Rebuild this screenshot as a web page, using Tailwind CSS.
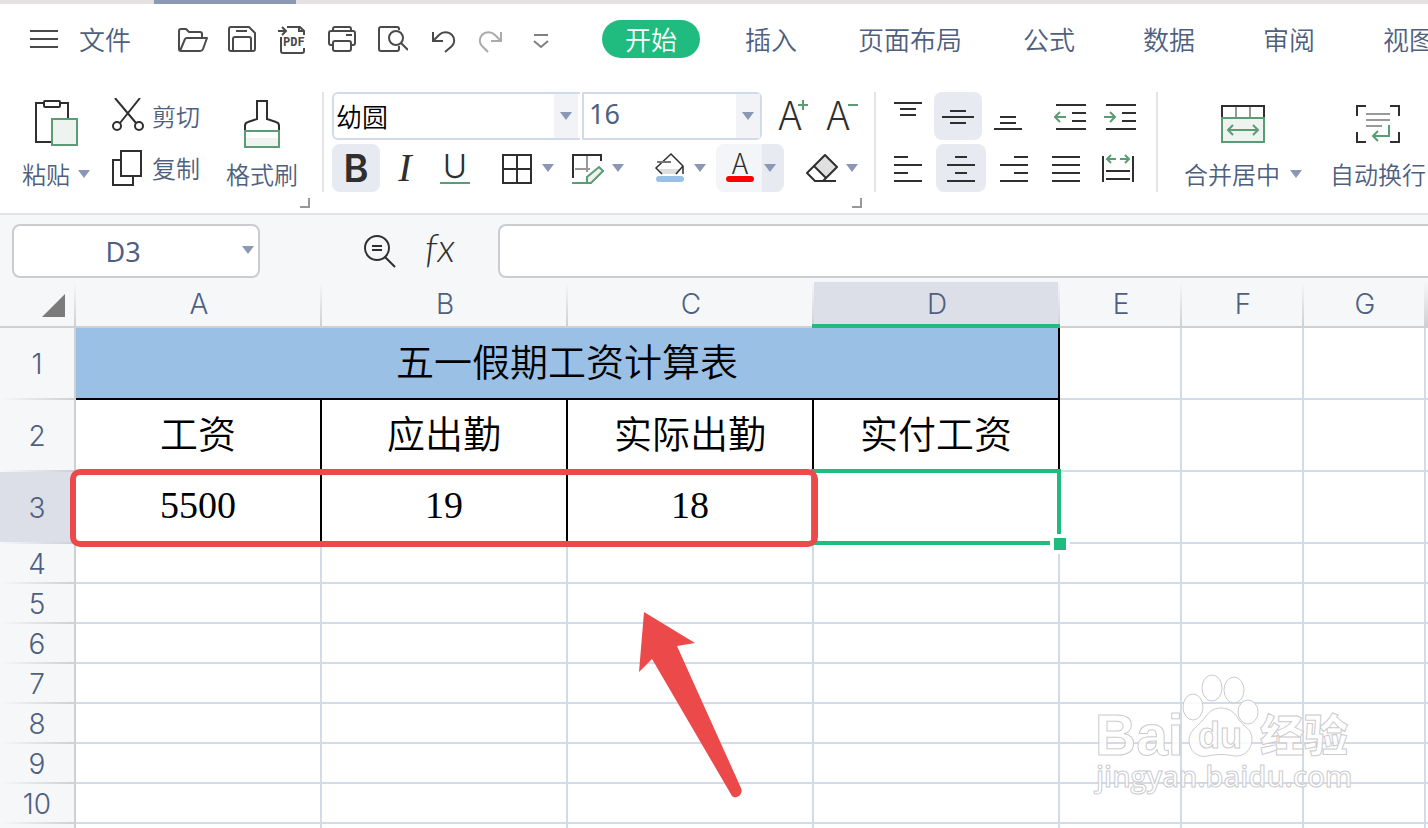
<!DOCTYPE html>
<html lang="zh-CN">
<head>
  <meta charset="UTF-8" />
  <meta name="viewport" content="width=device-width, initial-scale=1.0"/>
  <title>五一假期工资计算表</title>
  <script src="https://cdn.jsdelivr.net/npm/@tailwindcss/browser@4"></script>
</head>
<body class="h-screen overflow-hidden flex flex-col bg-white text-[#4f5f80] font-[350] font-['Noto_Sans_CJK_SC',sans-serif]">
  <!-- Thanh tab tài liệu -->
  <div class="h-1 shrink-0 bg-[#e5e1e3] pl-[154px]">
    <div class="h-1 w-[142px] bg-[#8a98b4]"></div>
  </div>

  <!-- Menu -->
  <nav class="h-[70px] shrink-0 flex items-center pl-7 text-[26px] leading-[38px] whitespace-nowrap overflow-hidden">
    <button class="flex items-center gap-[19px] shrink-0">
      <svg class="w-8 h-8" viewBox="0 0 32 32" fill="none" stroke="#4a4a4a" stroke-width="2"><path d="M2 8h28M2 16h28M2 24h28"/></svg>
      文件
    </button>
    <div class="flex gap-[18px] ml-[45px] shrink-0">
      <button aria-label="打开"><svg class="w-8 h-8" viewBox="0 0 32 32" fill="none" stroke="#4a4a4a" stroke-width="2" stroke-linejoin="round"><path d="M3 27V8a2 2 0 0 1 2-2h5l3 3h11a2 2 0 0 1 2 2v3M4 28l5-12a2 2 0 0 1 2-1h20l-4 11a3 3 0 0 1-3 2H5a2 2 0 0 1-2-2"/></svg></button>
      <button aria-label="保存"><svg class="w-8 h-8" viewBox="0 0 32 32" fill="none" stroke="#4a4a4a" stroke-width="2" stroke-linejoin="round"><path d="M5 4h18l6 6v16a2 2 0 0 1-2 2H5a2 2 0 0 1-2-2V6a2 2 0 0 1 2-2zM10 8h11M7 28V16a2 2 0 0 1 2-2h14a2 2 0 0 1 2 2v12"/></svg></button>
      <button aria-label="输出为PDF"><svg class="w-8 h-8" viewBox="0 0 32 32" fill="none" stroke="#4a4a4a" stroke-width="2"><path d="M2 8h8M6 4l4 4-4 4M11 4h13l4 4v4M23 4v4h5M5 14v14a2 2 0 0 0 2 2h19a2 2 0 0 0 2-2v-3"/><text x="7" y="23" font-size="12" font-weight="700" font-family="DejaVu Sans Mono" fill="#4a4a4a" stroke="none">PDF</text></svg></button>
      <button aria-label="打印"><svg class="w-8 h-8" viewBox="0 0 32 32" fill="none" stroke="#4a4a4a" stroke-width="2"><path d="M7 8V6a2 2 0 0 1 2-2h14a2 2 0 0 1 2 2v2M7 22H5a2 2 0 0 1-2-2V10a2 2 0 0 1 2-2h22a2 2 0 0 1 2 2v10a2 2 0 0 1-2 2h-2M20 12h6"/><rect x="7" y="18" width="18" height="10" rx="2"/></svg></button>
      <button aria-label="打印预览"><svg class="w-8 h-8" viewBox="0 0 32 32" fill="none" stroke="#4a4a4a" stroke-width="2"><path d="M23 7V6a2 2 0 0 0-2-2H5a2 2 0 0 0-2 2v20a2 2 0 0 0 2 2h16a2 2 0 0 0 2-2v-3M25 20l7 7"/><circle cx="20" cy="15" r="7"/></svg></button>
      <button aria-label="撤消"><svg class="w-8 h-8" viewBox="0 0 32 32" fill="none" stroke="#4a4a4a" stroke-width="2"><path d="M7 9v9h10M8 17l5-5a9 9 0 0 1 13 0a8 8 0 0 1 0 11l-7 6"/></svg></button>
      <button aria-label="恢复"><svg class="w-8 h-8" viewBox="0 0 32 32" fill="none" stroke="#aaaaaa" stroke-width="2"><path d="M25 9v9H15M24 17l-5-5a9 9 0 0 0-13 0a8 8 0 0 0 0 11l6 6"/></svg></button>
      <button aria-label="更多"><svg class="w-8 h-8" viewBox="0 0 32 32" fill="none" stroke="#808080" stroke-width="2"><path d="M8 12h14M8 18l7 6 7-6"/></svg></button>
    </div>
    <div class="flex gap-[22px] ml-11 shrink-0">
      <a href="#" class="px-[23px] rounded-full bg-[#20bb7e] text-white">开始</a>
      <a href="#" class="px-[23px]">插入</a>
      <a href="#" class="px-4">页面布局</a>
      <a href="#" class="px-[23px]">公式</a>
      <a href="#" class="px-[23px]">数据</a>
      <a href="#" class="px-[23px]">审阅</a>
      <a href="#" class="px-[23px]">视图</a>
    </div>
  </nav>

  <!-- Ribbon -->
  <div class="shrink-0 flex pt-[18px] pb-[21px] border-b-2 border-[#e2e3e8] text-2xl whitespace-nowrap overflow-hidden">
    <!-- Clipboard -->
    <div class="relative flex shrink-0 pl-[22px] pr-6 border-r-2 border-[#e4e5e8]">
      <button class="w-[68px] flex flex-col items-center">
        <span class="h-16 flex items-center">
          <svg class="w-11 h-12" viewBox="0 1 44 48" fill="white" stroke="#2f2f2f" stroke-width="2"><rect x="2" y="4" width="32" height="39"/><rect x="10" y="2" width="16" height="6" rx="1"/><rect x="18" y="20" width="25" height="26" fill="#eef3f0" stroke="#5a9c74"/></svg>
        </span>
        <span class="flex items-center gap-2 leading-9">粘贴
          <svg class="w-3 h-2" viewBox="0 0 12 8" fill="#8b98b5"><path d="M0 0h12L6 8z"/></svg></span>
      </button>
      <div class="flex flex-col gap-1 ml-[22px]">
        <button class="h-12 flex items-center gap-2">
          <svg class="w-8 h-9" viewBox="0 0 32 36" fill="none" stroke="#2f2f2f" stroke-width="2"><path d="M3 0l21 25M28 0L8 25"/><circle cx="5" cy="28" r="4"/><circle cx="27" cy="28" r="4"/></svg>剪切</button>
        <button class="h-12 flex items-center gap-2">
          <svg class="w-8 h-9" viewBox="0 0 32 36" fill="none" stroke="#2f2f2f" stroke-width="2"><path d="M9 10H1v25h20v-8"/><rect x="9" y="1" width="20" height="25"/></svg>复制</button>
      </div>
      <button class="w-[72px] ml-[26px] flex flex-col items-center">
        <span class="h-16 flex items-center">
          <svg class="w-9 h-12" viewBox="0 0 36 48" fill="none" stroke="#2f2f2f" stroke-width="2"><path d="M1 31v-5a4 4 0 0 1 3-4l9-3V1h10v18l9 3a4 4 0 0 1 3 4v5"/><path d="M2 38h32v8H2z" fill="#eef3f0" stroke="none"/><path d="M1 31h34v16H1z" stroke="#5a9c74"/></svg>
        </span>
        <span class="leading-9">格式刷</span>
      </button>
      <svg class="absolute right-3 -bottom-4 w-[10px] h-[10px]" viewBox="0 0 10 10" fill="none" stroke="#999" stroke-width="2"><path d="M9 0v9H0"/></svg>
    </div>

    <!-- Font -->
    <div class="relative flex flex-col gap-1 shrink-0 pl-2 pr-4 border-r-2 border-[#e4e5e8]">
      <div class="flex">
        <div class="relative">
          <select aria-label="字体" class="appearance-none block w-[248px] h-12 border-2 border-r-0 border-[#d2d9e9] rounded-l-md pl-[2px] text-[26px] leading-[44px] text-black bg-white">
            <option>幼圆</option>
            <option>宋体</option>
          </select>
          <span class="absolute right-[2px] top-[2px] w-6 h-11 bg-[#f1f3f6] flex items-center justify-center pointer-events-none"><svg class="w-3 h-2" viewBox="0 0 12 8" fill="#8b98b5"><path d="M0 0h12L6 8z"/></svg></span>
        </div>
        <div class="relative ml-[2px]">
          <select aria-label="字号" class="appearance-none block w-[180px] h-12 border-2 border-[#d2d9e9] rounded-r-md pl-[5px] pb-1 text-[27px] leading-[40px] font-normal bg-white font-['Noto_Sans',sans-serif]">
            <option>16</option>
            <option>18</option>
          </select>
          <span class="absolute right-[2px] top-[2px] w-6 h-11 bg-[#f1f3f6] flex items-center justify-center pointer-events-none"><svg class="w-3 h-2" viewBox="0 0 12 8" fill="#8b98b5"><path d="M0 0h12L6 8z"/></svg></span>
        </div>
        <button aria-label="增大字号" class="ml-4"><svg class="w-8 h-9 overflow-visible" viewBox="0 0 32 36"><text x="12" y="32" text-anchor="middle" font-size="40" font-weight="300" font-family="Noto Sans CJK SC" fill="#2f2f2f">A</text><path d="M20 7h10M25 2v10" stroke="#5a9c74" stroke-width="2"/></svg></button>
        <button aria-label="减小字号" class="ml-4"><svg class="w-8 h-9 overflow-visible" viewBox="0 0 32 36"><text x="12" y="32" text-anchor="middle" font-size="40" font-weight="300" font-family="Noto Sans CJK SC" fill="#2f2f2f">A</text><path d="M22 7h10" stroke="#5a9c74" stroke-width="2"/></svg></button>
      </div>
      <div class="flex h-12">
        <button class="w-12 rounded-lg bg-[#e7eaf0] text-[38px] leading-[48px] font-semibold text-[#2f2f2f] font-[Inter,sans-serif]">B</button>
        <button class="w-[50px] text-[40px] leading-[48px] italic text-[#2f2f2f] font-['Liberation_Serif',serif]">I</button>
        <button aria-label="下划线" class="w-[50px] flex justify-center items-center"><svg class="w-8 h-8 overflow-visible" viewBox="0 0 32 32"><text x="16" y="26" text-anchor="middle" font-size="33" font-weight="300" font-family="Inter" fill="#2f2f2f">U</text><path d="M1 31h30" stroke="#5a9c74" stroke-width="2"/></svg></button>
        <button aria-label="边框" class="ml-[22px] flex items-center gap-2">
          <svg class="w-8 h-8" viewBox="0 0 32 32" fill="none" stroke="#2f2f2f" stroke-width="2"><path d="M1 3h28v28H1zM15 3v28M1 17h28"/></svg>
          <svg class="w-3 h-2" viewBox="0 0 12 8" fill="#8b98b5"><path d="M0 0h12L6 8z"/></svg>
        </button>
        <button aria-label="绘制边框" class="ml-[18px] flex items-center gap-2">
          <svg class="w-8 h-8" viewBox="0 0 32 32" fill="none" stroke="#2f2f2f" stroke-width="2"><path d="M15 4v16M3 17h15" stroke="#999"/><path d="M1 26V3h28v6"/><path d="M0 31h16" stroke="#5a9c74"/><path d="M15 31v-6l12-10 4 4-12 12z" stroke="#5a9c74" fill="#eef3f0"/></svg>
          <svg class="w-3 h-2" viewBox="0 0 12 8" fill="#8b98b5"><path d="M0 0h12L6 8z"/></svg>
        </button>
        <button aria-label="填充颜色" class="ml-[30px] flex items-center gap-2">
          <svg class="w-8 h-8" viewBox="0 0 32 32" fill="none" stroke="#2f2f2f" stroke-width="1.5"><path d="M5 17h22l-4 5H8z" fill="#dedede" stroke="none"/><path d="M8 22l-6-6L17 2l12 12v8M29 14l-7 8"/><path d="M3 10h14" stroke="#777" stroke-width="2"/><rect x="2" y="24" width="28" height="6" rx="3" fill="#9bc0e6" stroke="none"/></svg>
          <svg class="w-3 h-2" viewBox="0 0 12 8" fill="#8b98b5"><path d="M0 0h12L6 8z"/></svg>
        </button>
        <button aria-label="字体颜色" class="ml-[10px] flex rounded-lg overflow-hidden">
          <span class="w-[46px] h-12 bg-[#f3f5f8] flex items-center justify-center pl-[2px]">
            <svg class="w-8 h-8 overflow-visible" viewBox="0 0 32 32"><text x="16" y="22" text-anchor="middle" font-size="28" font-weight="300" font-family="Noto Sans CJK SC" fill="#2f2f2f">A</text><rect x="1" y="23" width="30" height="8" rx="4" fill="white"/><rect x="2" y="24" width="28" height="6" rx="3" fill="red"/></svg>
          </span>
          <span class="w-[22px] h-12 bg-[#e7eaf0] flex items-center pl-[2px]"><svg class="w-3 h-2" viewBox="0 0 12 8" fill="#8b98b5"><path d="M0 0h12L6 8z"/></svg></span>
        </button>
        <button aria-label="清除" class="ml-[22px] flex items-center gap-2">
          <svg class="w-8 h-8" viewBox="0 0 32 32" fill="none" stroke="#2f2f2f" stroke-width="2" stroke-linejoin="round"><path d="M19 3l12 12-11 11L8 14z" fill="#e0e0e0"/><path d="M8 14l-7 7 8 8h21M20 26l-3 3"/></svg>
          <svg class="w-3 h-2" viewBox="0 0 12 8" fill="#8b98b5"><path d="M0 0h12L6 8z"/></svg>
        </button>
      </div>
      <svg class="absolute right-3 -bottom-4 w-[10px] h-[10px]" viewBox="0 0 10 10" fill="none" stroke="#999" stroke-width="2"><path d="M9 0v9H0"/></svg>
    </div>

    <!-- Alignment -->
    <div class="flex flex-col gap-1 shrink-0 px-2 w-[282px] border-r-2 border-[#e4e5e8]">
      <div class="flex gap-[2px] h-12">
        <button aria-label="顶端对齐" class="w-12 flex items-center justify-center"><svg class="w-8 h-8" viewBox="0 0 32 32" stroke="#2f2f2f" stroke-width="2"><path d="M2 3h28M8 9h16M8 15h16"/></svg></button>
        <button aria-label="垂直居中" class="w-12 rounded-lg bg-[#e7eaf0] flex items-center justify-center"><svg class="w-8 h-8" viewBox="0 0 32 32" stroke="#2f2f2f" stroke-width="2"><path d="M8 11h16M0 17h32M8 23h16"/></svg></button>
        <button aria-label="底端对齐" class="w-12 flex items-center justify-center"><svg class="w-8 h-8" viewBox="0 0 32 32" stroke="#2f2f2f" stroke-width="2"><path d="M8 17h16M8 23h16M2 29h28"/></svg></button>
        <button aria-label="减少缩进" class="w-12 ml-3 flex items-center justify-center"><svg class="w-8 h-8" viewBox="0 0 32 32" fill="none" stroke="#2f2f2f" stroke-width="2"><path d="M2 5h30M18 13h14M18 21h14M2 29h30"/><path d="M12 17H1M6 12l-5 5 5 5" stroke="#5a9c74"/></svg></button>
        <button aria-label="增加缩进" class="w-12 flex items-center justify-center"><svg class="w-8 h-8" viewBox="0 0 32 32" fill="none" stroke="#2f2f2f" stroke-width="2"><path d="M2 5h30M18 13h14M18 21h14M2 29h30"/><path d="M0 17h11M6 12l5 5-5 5" stroke="#5a9c74"/></svg></button>
      </div>
      <div class="flex gap-1 h-12">
        <button aria-label="左对齐" class="w-12 flex items-center justify-center"><svg class="w-8 h-8" viewBox="0 0 32 32" stroke="#2f2f2f" stroke-width="2"><path d="M2 5h14M2 13h28M2 21h14M2 29h28"/></svg></button>
        <button aria-label="水平居中" class="w-[50px] rounded-lg bg-[#e7eaf0] flex items-center justify-center"><svg class="w-8 h-8" viewBox="0 0 32 32" stroke="#2f2f2f" stroke-width="2"><path d="M10 5h12M2 13h28M10 21h12M2 29h28"/></svg></button>
        <button aria-label="右对齐" class="w-12 flex items-center justify-center"><svg class="w-8 h-8" viewBox="0 0 32 32" stroke="#2f2f2f" stroke-width="2"><path d="M16 5h14M2 13h28M16 21h14M2 29h28"/></svg></button>
        <button aria-label="两端对齐" class="w-12 flex items-center justify-center"><svg class="w-8 h-8" viewBox="0 0 32 32" stroke="#2f2f2f" stroke-width="2"><path d="M2 5h28M2 13h28M2 21h28M2 29h28"/></svg></button>
        <button aria-label="分散对齐" class="w-12 flex items-center justify-center"><svg class="w-8 h-8" viewBox="0 0 32 32" fill="none" stroke="#2f2f2f" stroke-width="2"><path d="M1 4v26M31 4v26M4 19h24M4 27h24"/><path d="M14 7H5M9 3L5 7l4 4M18 7h9M23 3l4 4-4 4" stroke="#5a9c74"/></svg></button>
      </div>
    </div>

    <!-- Merge / wrap -->
    <div class="relative flex grow shrink-0 gap-7 pl-[26px]">
      <button class="flex flex-col items-center">
        <span class="h-16 flex items-center"><svg class="w-11 h-[38px]" viewBox="0 0 44 38" fill="none" stroke="#2f2f2f" stroke-width="2"><path d="M15 2v10M29 2v10" stroke="#999"/><path d="M1 13V1h42v12"/><path d="M1 13h42v24H1z" fill="#eef3f0" stroke="#5a9c74"/><path d="M7 25h30M12 20l-5 5 5 5M32 20l5 5-5 5" stroke="#5a9c74"/></svg></span>
        <span class="flex items-center gap-[10px] leading-9">合并居中
          <svg class="w-3 h-2" viewBox="0 0 12 8" fill="#8b98b5"><path d="M0 0h12L6 8z"/></svg></span>
      </button>
      <button class="flex flex-col items-center">
        <span class="h-16 flex items-center"><svg class="w-11 h-[38px]" viewBox="0 0 44 38" fill="none" stroke="#2f2f2f" stroke-width="2"><path d="M1 11V1h9M34 1h9v10M43 27v10h-9M10 37H1V27"/><path d="M10 9h24M10 15h24M10 21h16" stroke="#999"/><path d="M33 20v11H17M22 26l-5 5 5 5" stroke="#5a9c74"/></svg></span>
        <span class="leading-9">自动换行</span>
      </button>
    </div>
  </div>

  <!-- Formula bar -->
  <div class="shrink-0 flex pt-[9px] pb-1 pl-3 bg-[#f5f7f9]">
    <div class="relative shrink-0">
      <input type="text" aria-label="名称框" value="D3" class="block w-[248px] h-[54px] pr-[26px] border-2 border-[#cbcccf] rounded-lg bg-white text-center text-[27px] font-normal font-['Noto_Sans',sans-serif]" />
      <svg class="absolute right-[6px] top-[22px] w-3 h-2 pointer-events-none" viewBox="0 0 12 8" fill="#8b98b5"><path d="M0 0h12L6 8z"/></svg>
    </div>
    <button aria-label="查找" class="ml-[102px]"><svg class="w-9 h-9" viewBox="0 0 36 36" fill="none" stroke="#2f2f2f" stroke-width="2"><circle cx="15" cy="15" r="12"/><path d="M10 13h10M10 17h10M23 24l10 10"/></svg></button>
    <button class="ml-6 w-9 text-[40px] leading-[44px] pb-2 italic font-light text-[#2f2f2f] font-[Lato,sans-serif]">fx</button>
    <input type="text" aria-label="编辑栏" class="ml-10 grow h-[54px] border-2 border-r-0 border-[#cbcccf] rounded-l-lg bg-white px-2 text-[26px]" />
  </div>

  <!-- Bảng tính -->
  <main class="relative grow min-h-0 overflow-hidden">
    <table class="w-full table-fixed border-separate border-spacing-0 text-[28px] leading-[38px] text-center">
      <colgroup>
        <col class="w-[76px]"><col class="w-[246px]"><col class="w-[246px]"><col class="w-[246px]"><col class="w-[246px]"><col class="w-[122px]"><col class="w-[122px]"><col class="w-[122px]"><col>
      </colgroup>
      <thead class="font-[Inter,sans-serif]">
        <tr class="h-[46px] bg-[#f5f7f9] *:p-0 *:font-[350] *:border-b-2 *:border-[#cfd0d2] *:bg-[linear-gradient(#f5f7f9,#cfd0d2)] *:bg-[length:2px_100%] *:bg-right *:bg-no-repeat">
          <th><button aria-label="全选" class="block ml-[42px] mt-1"><svg class="w-6 h-6" viewBox="0 0 24 24" fill="#7b7b7b"><path d="M23 0v23H0z"/></svg></button></th>
          <th>A</th>
          <th>B</th>
          <th>C</th>
          <th class="relative bg-[#dcdfe8]">D<span class="absolute -left-[2px] right-0 -bottom-[2px] h-1 bg-[#20bb7e]"></span></th>
          <th>E</th>
          <th>F</th>
          <th>G</th>
          <th></th>
        </tr>
      </thead>
      <tbody id="rows"></tbody>
    </table>

    <!-- Khung đỏ và mũi tên -->
    <div class="absolute left-[70px] top-[187px] w-[748px] h-[78px] border-6 border-[#ec4a4a] rounded-[10px] pointer-events-none"></div>
    <svg class="absolute left-[638px] top-[329px] w-[106px] h-[188px] pointer-events-none" viewBox="0 0 106 188" fill="#ec4a4a"><path d="M6 1L57 32 39 35l64 142c3 6-5 12-9 8L14 48 1 61z"/></svg>

    <!-- Watermark -->
    <svg class="absolute left-[1090px] top-[388px] w-[270px] h-[132px] pointer-events-none" viewBox="0 0 270 132" fill="#ffffff" fill-opacity="0.85" stroke="#cbcbcf" stroke-width="1">
      <text x="5" y="85" font-size="57" font-weight="700" font-family="Liberation Sans">Bai</text>
      <ellipse cx="103" cy="37" rx="10" ry="13"/>
      <ellipse cx="122" cy="18" rx="10" ry="13"/>
      <ellipse cx="144" cy="20" rx="10" ry="13"/>
      <ellipse cx="158" cy="42" rx="10" ry="12"/>
      <path d="M131 38c9 0 14 5 18 12 5 7 13 9 13 19 0 11-8 18-18 17-9-2-17-2-26 0-11 2-19-5-19-16 0-9 9-14 14-20 5-7 9-12 18-12z"/>
      <text x="108" y="78" font-size="36" font-weight="700" font-family="Liberation Sans">du</text>
      <text x="170" y="82" font-size="44" font-weight="900" font-family="Noto Sans CJK SC">经验</text>
      <text x="6" y="117" font-size="29" font-weight="600" font-family="Open Sans">jingyan.baidu.com</text>
    </svg>
  </main>

  <script>
    const data = [
      ["工资", "应出勤", "实际出勤", "实付工资"],
      ["5500", "19", "18", ""]
    ];
    const rowsEl = document.getElementById("rows");
    const line = "border-r-2 border-b-2 border-[#d3dae8]";

    for (let n = 1; n <= 12; n++) {
      const headBg = n === 3 ? "bg-[#dcdfe8]" : "bg-[#f5f7f9]";
      let html = `<th class="p-0 font-[350] font-[Inter,sans-serif] border-r-2 border-[#cfd0d2] ${headBg} bg-[linear-gradient(to_right,#f5f7f9,#cfd0d2)] bg-[length:100%_2px] bg-bottom bg-no-repeat">${n}</th>`;

      if (n === 1) {
        html += `<td colspan="4" class="p-0 pb-1.5 bg-[#9bc0e6] border-r-2 border-b-2 border-black text-black text-[38px]">五一假期工资计算表</td>`;
      } else if (n === 2) {
        data[0].forEach(t => {
          html += `<td class="p-0 pb-1.5 border-r-2 border-b-2 border-black text-black text-[38px]">${t}</td>`;
        });
      } else if (n === 3) {
        data[1].slice(0, 3).forEach(t => {
          html += `<td class="p-0 pb-1 border-r-2 border-b-2 border-black text-black text-[38px] font-['Liberation_Serif',serif]">${t}</td>`;
        });
        // ô đang chọn
        html += `<td class="relative p-0 ${line}">
          <div class="absolute -inset-[3px] border-4 border-[#20bb7e]"></div>
          <div class="absolute -right-[12px] -bottom-[12px] w-5 h-5 border-4 border-white bg-[#20bb7e]"></div>
        </td>`;
      } else {
        html += `<td class="p-0 ${line}"></td>`.repeat(4);
      }
      html += `<td class="p-0 ${line}"></td>`.repeat(3) + `<td class="p-0 border-b-2 border-[#d3dae8]"></td>`;
      rowsEl.innerHTML += `<tr class="${n <= 3 ? "h-[72px]" : "h-10"}">${html}</tr>`;
    }
  </script>
</body>
</html>
